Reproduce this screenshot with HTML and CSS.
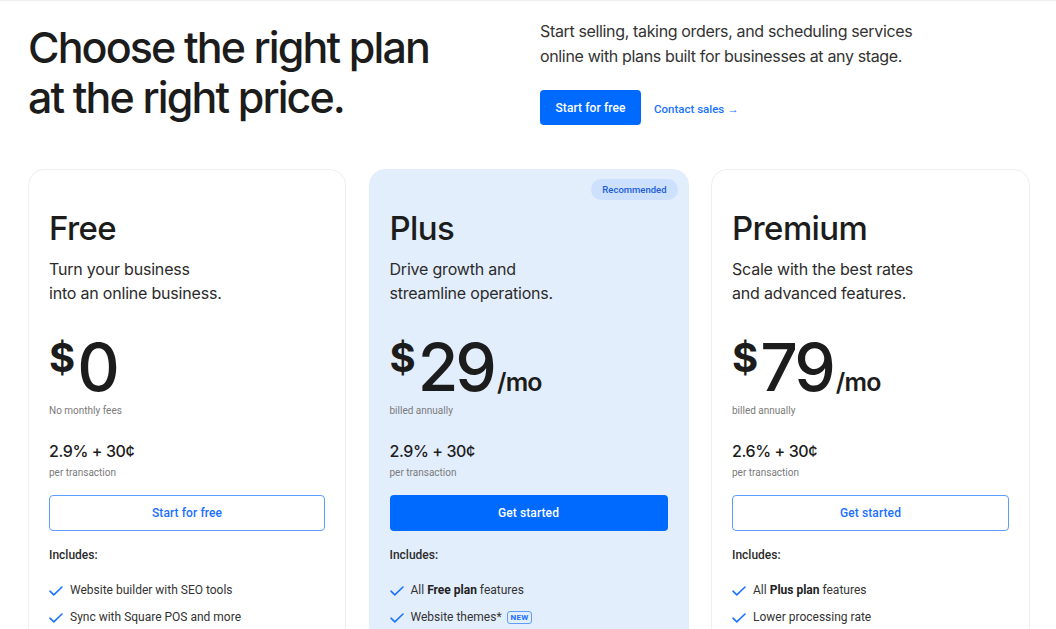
FILE: index.html
```html
<!DOCTYPE html>
<html lang="en">
<head>
<meta charset="utf-8">
<title>Pricing</title>
<link rel="stylesheet" href="styles.css">
</head>
<body>
<div class="page">
  <header class="hero">
    <h1 class="hero-title">Choose the right plan<br>at the right price.</h1>
    <div class="hero-side">
      <p class="hero-text">Start selling, taking orders, and scheduling services online with plans built for businesses at any stage.</p>
      <div class="hero-actions">
        <a class="btn btn-solid hero-btn" href="#">Start for free</a>
        <a class="link" href="#">Contact sales →</a>
      </div>
    </div>
  </header>

  <section class="plans">
    <article class="card">
      <h2 class="plan-name">Free</h2>
      <p class="plan-desc">Turn your business<br>into an online business.</p>
      <div class="price"><span class="cur">$</span><span class="amt">0</span></div>
      <p class="note">No monthly fees</p>
      <p class="rate">2.9% + 30¢</p>
      <p class="note note-rate">per transaction</p>
      <a class="btn btn-outline" href="#">Start for free</a>
      <p class="includes">Includes:</p>
      <ul class="features">
        <li><svg class="check" viewBox="0 0 14 10" width="14" height="10"><path d="M1 5.2 L4.8 8.8 L13 1" fill="none" stroke="#1a73ff" stroke-width="1.6" stroke-linecap="round" stroke-linejoin="round"/></svg>Website builder with SEO tools</li>
        <li><svg class="check" viewBox="0 0 14 10" width="14" height="10"><path d="M1 5.2 L4.8 8.8 L13 1" fill="none" stroke="#1a73ff" stroke-width="1.6" stroke-linecap="round" stroke-linejoin="round"/></svg>Sync with Square POS and more</li>
      </ul>
    </article>

    <article class="card card-featured">
      <span class="badge">Recommended</span>
      <h2 class="plan-name">Plus</h2>
      <p class="plan-desc">Drive growth and<br>streamline operations.</p>
      <div class="price"><span class="cur">$</span><span class="amt">29</span><span class="per">/mo</span></div>
      <p class="note">billed annually</p>
      <p class="rate">2.9% + 30¢</p>
      <p class="note note-rate">per transaction</p>
      <a class="btn btn-solid" href="#">Get started</a>
      <p class="includes">Includes:</p>
      <ul class="features">
        <li><svg class="check" viewBox="0 0 14 10" width="14" height="10"><path d="M1 5.2 L4.8 8.8 L13 1" fill="none" stroke="#1a73ff" stroke-width="1.6" stroke-linecap="round" stroke-linejoin="round"/></svg>All&nbsp;<b>Free plan</b>&nbsp;features</li>
        <li><svg class="check" viewBox="0 0 14 10" width="14" height="10"><path d="M1 5.2 L4.8 8.8 L13 1" fill="none" stroke="#1a73ff" stroke-width="1.6" stroke-linecap="round" stroke-linejoin="round"/></svg>Website themes*<span class="new">NEW</span></li>
      </ul>
    </article>

    <article class="card">
      <h2 class="plan-name">Premium</h2>
      <p class="plan-desc">Scale with the best rates<br>and advanced features.</p>
      <div class="price"><span class="cur">$</span><span class="amt">79</span><span class="per">/mo</span></div>
      <p class="note">billed annually</p>
      <p class="rate">2.6% + 30¢</p>
      <p class="note note-rate">per transaction</p>
      <a class="btn btn-outline" href="#">Get started</a>
      <p class="includes">Includes:</p>
      <ul class="features">
        <li><svg class="check" viewBox="0 0 14 10" width="14" height="10"><path d="M1 5.2 L4.8 8.8 L13 1" fill="none" stroke="#1a73ff" stroke-width="1.6" stroke-linecap="round" stroke-linejoin="round"/></svg>All&nbsp;<b>Plus plan</b>&nbsp;features</li>
        <li><svg class="check" viewBox="0 0 14 10" width="14" height="10"><path d="M1 5.2 L4.8 8.8 L13 1" fill="none" stroke="#1a73ff" stroke-width="1.6" stroke-linecap="round" stroke-linejoin="round"/></svg>Lower processing rate</li>
      </ul>
    </article>
  </section>
</div>
</body>
</html>
```

FILE: styles.css
```css
* { box-sizing: border-box; }

html, body {
  margin: 0;
  padding: 0;
  background: #ffffff;
}

body {
  font-family: Inter, "Noto Sans", sans-serif;
  color: #1a1a1a;
  border-top: 1px solid #f0f0f0;
  overflow: hidden;
  height: 629px;
}

.page {
  width: 1002px;
  margin-left: 28px;
}

/* hero */
.hero {
  display: flex;
  justify-content: space-between;
  align-items: flex-start;
  padding-top: 18px;
}

.hero-title {
  margin: 0;
  padding-top: 3px;
  font-size: 43px;
  line-height: 50px;
  font-weight: 500;
  letter-spacing: -1.9px;
  color: #1c1c1c;
}

.hero-side {
  width: 490px;
}

.hero-text {
  margin: 0;
  width: 385px;
  font-size: 16px;
  line-height: 25px;
  color: #333333;
  letter-spacing: -0.35px;
}

.hero-actions {
  display: flex;
  align-items: center;
  gap: 13px;
  margin-top: 21px;
}

.btn {
  display: flex;
  align-items: center;
  justify-content: center;
  height: 36px;
  border-radius: 4px;
  font-family: Roboto, "Liberation Sans", sans-serif;
  font-size: 12px;
  font-weight: 500;
  text-decoration: none;
  letter-spacing: 0.1px;
}

.btn-solid {
  background: #006aff;
  color: #ffffff;
}

.hero-btn {
  width: 101px;
  height: 35px;
}

.btn-outline {
  background: #ffffff;
  color: #1a6fff;
  border: 1px solid #5c9dff;
}

.link {
  font-family: Roboto, "Liberation Sans", sans-serif;
  font-size: 11.5px;
  font-weight: 500;
  color: #1a73ff;
  text-decoration: none;
  padding-top: 2px;
}

/* plans */
.plans {
  display: grid;
  grid-template-columns: 318px 320px 319px;
  column-gap: 22.5px;
  margin-top: 44px;
}

.card {
  position: relative;
  border: 1px solid #efefef;
  border-radius: 16px;
  padding: 38px 20px 0 20px;
  height: 480px;
  background: #ffffff;
}

.card-featured {
  background: #e3eefd;
  border-color: #e3eefd;
}

.badge {
  position: absolute;
  top: 9px;
  right: 10px;
  height: 21px;
  padding: 0 11px;
  border-radius: 11px;
  background: #cde0fd;
  color: #1a5fd6;
  font-family: Roboto, "Liberation Sans", sans-serif;
  font-size: 9.5px;
  font-weight: 500;
  line-height: 21px;
}

.plan-name {
  margin: 0;
  font-size: 33px;
  line-height: 40px;
  font-weight: 500;
  letter-spacing: -0.6px;
  color: #1c1c1c;
}

.plan-desc {
  margin: 9px 0 0;
  font-size: 16px;
  line-height: 24px;
  color: #2b2b2b;
  letter-spacing: -0.2px;
}

.price {
  display: flex;
  align-items: baseline;
  margin-top: 31px;
  height: 62px;
  color: #1c1c1c;
}

.cur {
  align-self: flex-start;
  font-size: 40px;
  font-weight: 700;
  line-height: 40px;
  margin-top: 2px;
  margin-right: 2px;
}

.amt {
  font-size: 66px;
  font-weight: 500;
  line-height: 62px;
  letter-spacing: -3px;
}

.per {
  font-size: 25px;
  font-weight: 600;
  line-height: 26px;
  letter-spacing: -0.8px;
  margin-left: 3px;
}

.note {
  margin: 6px 0 0;
  font-family: Roboto, "Liberation Sans", sans-serif;
  font-size: 10px;
  line-height: 14px;
  color: #7a7a7a;
}

.rate {
  margin: 22px 0 0;
  font-size: 16px;
  line-height: 22px;
  font-weight: 500;
  letter-spacing: -0.4px;
  color: #1c1c1c;
}

.note-rate {
  margin-top: 4px;
}

.card .btn {
  margin-top: 15px;
  width: 100%;
}

.includes {
  margin: 16px 0 0;
  font-family: Roboto, "Liberation Sans", sans-serif;
  font-size: 12px;
  line-height: 16px;
  font-weight: 500;
  color: #2b2b2b;
}

.features {
  list-style: none;
  margin: 18px 0 0;
  padding: 0;
}

.features li {
  display: flex;
  align-items: center;
  font-family: Roboto, "Liberation Sans", sans-serif;
  font-size: 12px;
  line-height: 18px;
  color: #333333;
  margin-bottom: 9px;
}

.features b {
  font-weight: 700;
  color: #222222;
}

.check {
  flex: none;
  margin-right: 7px;
  margin-top: 1px;
}

.new {
  display: inline-flex;
  align-items: center;
  height: 13px;
  margin-left: 5px;
  padding: 0 3px;
  border: 1px solid #5c9dff;
  border-radius: 3px;
  font-size: 8px;
  font-weight: 700;
  color: #1a6fff;
  line-height: 11px;
  letter-spacing: 0.2px;
}
```
